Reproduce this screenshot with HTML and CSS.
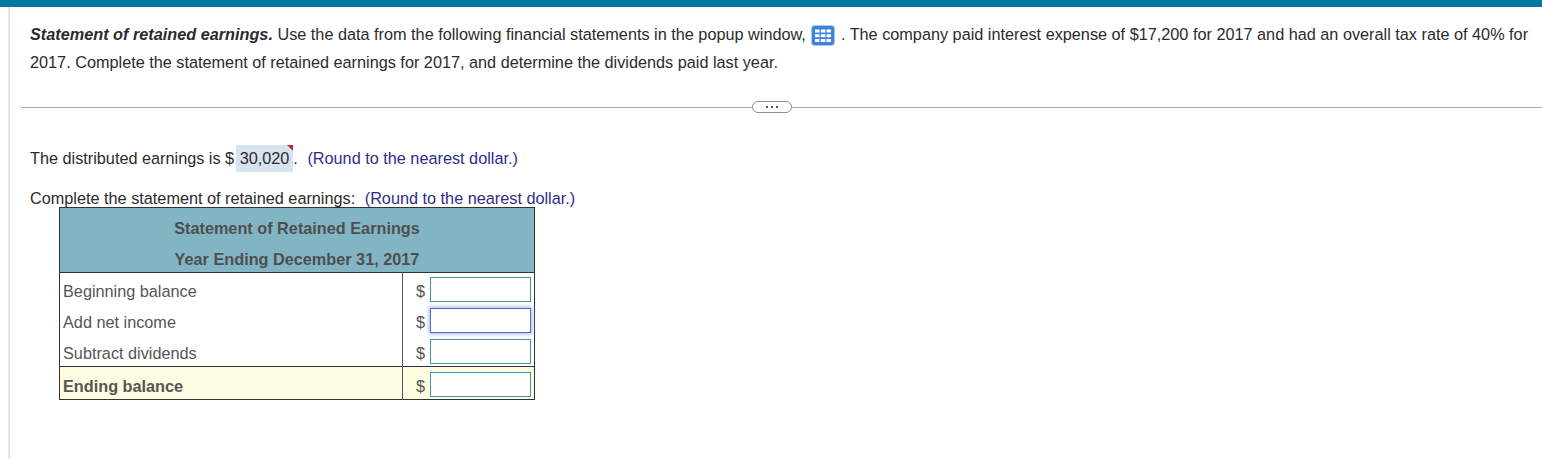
FILE: index.html
```html
<!DOCTYPE html>
<html lang="en">
<head>
    <meta charset="UTF-8">
    <title>Statement of retained earnings</title>
    <link rel="stylesheet" href="styles.css">
</head>
<body>
    <div class="topbar"></div>
    <div class="page">
        <div class="question">
            <p><b><i>Statement of retained earnings.</i></b> Use the data from the following financial statements in the popup window,
                <svg class="grid-icon" width="24" height="21" viewBox="0 0 24 21">
                    <rect x="0.5" y="0.5" width="23" height="20" rx="3" fill="#3f83dc" stroke="#a9c6ec"/>
                    <g fill="#fff">
                        <rect x="4" y="4.5" width="4.5" height="3"/><rect x="9.8" y="4.5" width="4.5" height="3"/><rect x="15.5" y="4.5" width="4.5" height="3"/>
                        <rect x="4" y="9.2" width="4.5" height="3"/><rect x="9.8" y="9.2" width="4.5" height="3"/><rect x="15.5" y="9.2" width="4.5" height="3"/>
                        <rect x="4" y="14" width="4.5" height="3"/><rect x="9.8" y="14" width="4.5" height="3"/><rect x="15.5" y="14" width="4.5" height="3"/>
                    </g>
                </svg>
                . The company paid interest expense of $17,200 for 2017 and had an overall tax rate of 40% for<br>2017. Complete the statement of retained earnings for 2017, and determine the dividends paid last year.</p>
        </div>
        <div class="divider">
            <div class="divider-line short"></div>
            <div class="pill"><span></span><span></span><span></span></div>
            <div class="divider-line"></div>
        </div>
        <div class="answer">
            <p class="distributed">The distributed earnings is $ <span class="filled">30,020<span class="flag"></span></span>. <span class="hint">(Round to the nearest dollar.)</span></p>
            <p class="complete">Complete the statement of retained earnings: <span class="hint">(Round to the nearest dollar.)</span></p>
            <table class="statement">
                <colgroup>
                    <col class="label-col">
                    <col>
                </colgroup>
                <thead>
                    <tr class="title-row"><th colspan="2">Statement of Retained Earnings</th></tr>
                    <tr class="year-row"><th colspan="2">Year Ending December 31, 2017</th></tr>
                </thead>
                <tbody>
                    <tr>
                        <td class="label">Beginning balance</td>
                        <td class="amount"><div class="cell"><span>$</span><div class="box"></div></div></td>
                    </tr>
                    <tr>
                        <td class="label">Add net income</td>
                        <td class="amount"><div class="cell"><span>$</span><div class="box focus"></div></div></td>
                    </tr>
                    <tr>
                        <td class="label">Subtract dividends</td>
                        <td class="amount"><div class="cell"><span>$</span><div class="box"></div></div></td>
                    </tr>
                    <tr class="total">
                        <td class="label">Ending balance</td>
                        <td class="amount"><div class="cell"><span>$</span><div class="box"></div></div></td>
                    </tr>
                </tbody>
            </table>
        </div>
    </div>
</body>
</html>
```

FILE: styles.css
```css
html, body {
    height: 100%;
}

body {
    margin: 0;
    font-family: "Liberation Sans", Arial, sans-serif;
    font-size: 16.25px;
    color: #2b2b2b;
    background: #fff;
    overflow: hidden;
}

p {
    margin: 0;
}

.topbar {
    height: 7px;
    background-color: #00799e;
}

.page {
    margin-left: 8px;
    border-left: 2px solid #e4e6ef;
    height: 452px;
    box-sizing: border-box;
}

.question {
    padding: 13px 6px 0 20px;
    line-height: 28px;
    height: 79px;
    box-sizing: border-box;
}

.grid-icon {
    vertical-align: -6px;
    margin: 0 1px;
}

.divider {
    display: flex;
    align-items: center;
    height: 12px;
    margin-left: 11px;
    margin-top: 15px;
}

.divider-line {
    flex: 1;
    height: 1px;
    background: #a6a9ad;
}

.divider-line.short {
    flex: none;
    width: 731px;
}

.pill {
    width: 38px;
    height: 10px;
    border: 1px solid #8d9197;
    border-radius: 6px;
    display: flex;
    justify-content: center;
    align-items: center;
    gap: 3px;
}

.pill span {
    width: 2px;
    height: 2px;
    background: #555;
}

.answer {
    padding-left: 20px;
}

.distributed {
    margin-top: 33px;
    line-height: 24px;
}

.filled {
    position: relative;
    background: #d9e2f1;
    padding: 4px 4px 5px;
    margin-left: -3px;
}

.flag {
    position: absolute;
    right: 0;
    top: 0;
    border-top: 6px solid #c2272d;
    border-left: 6px solid transparent;
}

.hint {
    color: #2e2e8a;
    margin-left: 5px;
}

.complete {
    margin-top: 16px;
    line-height: 24px;
    height: 21px;
}

.statement {
    margin-left: 29px;
    width: 476px;
    border-collapse: collapse;
    border: 1px solid #333;
    table-layout: fixed;
}

.label-col {
    width: 343px;
}

.statement th {
    background: #82b5c3;
    color: #4f4f4f;
    font-weight: bold;
    padding: 0;
}

.statement .title-row th {
    height: 37px;
    padding-top: 2px;
}

.year-row th {
    height: 25px;
}

.statement td {
    padding: 0;
    height: 31px;
    color: #555;
}

.statement tbody tr:first-child td {
    border-top: 1px solid #333;
}

.statement td.label {
    height: 25px;
    padding: 6px 0 0 3px;
    border-right: 1px solid #555;
}

.cell {
    display: flex;
    align-items: center;
    justify-content: flex-end;
    gap: 5px;
    padding: 2px 3px 0 0;
}

.cell span {
    padding-top: 4px;
}

.box {
    width: 99px;
    height: 23px;
    border: 1px solid #3f97ad;
    background: #fff;
}

.box.focus {
    border-color: #4a6fd0;
    box-shadow: 0 0 4px 1px #a4b4ea;
}

.total td {
    background: #fdfce0;
    border-top: 1px solid #333;
    height: 32px;
}

.statement .total td.label {
    height: 25px;
    padding-top: 7px;
    font-weight: bold;
}
```
